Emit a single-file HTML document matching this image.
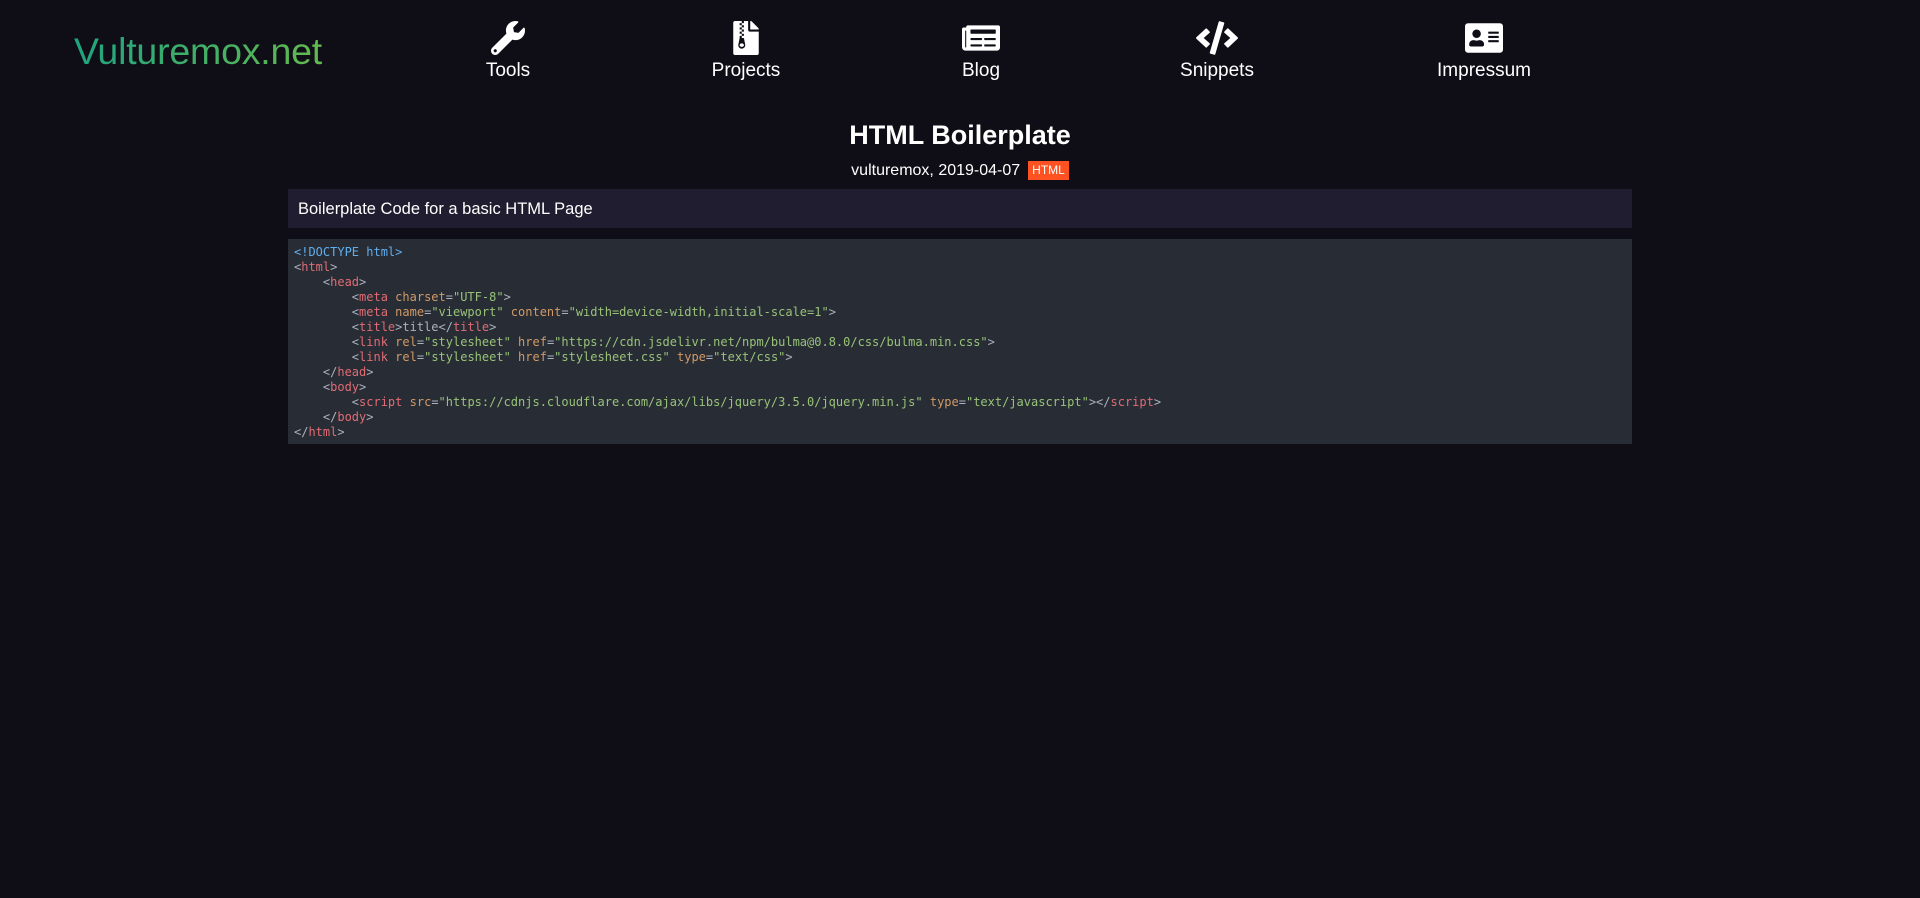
<!DOCTYPE html>
<html><head><meta charset="utf-8">
<style>
html,body{margin:0;padding:0;background:#0f0e17;width:1920px;height:898px;overflow:hidden;font-family:"Liberation Sans",sans-serif;color:#fffffe}
.logo{position:absolute;left:74px;top:29px;font-size:37.5px;line-height:44px;background:linear-gradient(90deg,#1fa57f,#62b94f);-webkit-background-clip:text;background-clip:text;color:transparent;letter-spacing:-0.2px}
.nav{position:absolute;top:21px;width:200px;margin-left:-100px;text-align:center}
.nav svg{display:block;margin:0 auto;height:34px}
.nav span{display:block;font-size:19px;line-height:24px;margin-top:4px;color:#fff}
h1{position:absolute;left:0;width:1920px;top:118px;margin:0;text-align:center;font-size:27px;line-height:34px;font-weight:bold}
.meta{position:absolute;left:0;width:1920px;top:160px;text-align:center;font-size:16px;line-height:22px}
.tag{display:inline-block;background:#ff5222;color:#fff;font-size:12px;line-height:19px;padding:0 4px;margin-left:8px;vertical-align:top;position:relative;top:1px}
.desc{position:absolute;left:288px;width:1344px;top:189px;height:39px;background:#201d30;box-sizing:border-box;padding-left:10px;padding-top:1px;font-size:16.5px;line-height:39px}
pre{position:absolute;left:288px;top:239px;width:1344px;height:205px;margin:0;background:#282c34;box-sizing:border-box;padding:6px 6px 4px;font-family:"DejaVu Sans Mono","Liberation Mono",monospace;font-size:12px;line-height:15px;color:#abb2bf}
.d{color:#61aeee}.t{color:#e06c75}.a{color:#d19a66}.s{color:#98c379}
</style></head><body>
<div class="logo">Vulturemox.net</div>

<div class="nav" style="left:508px"><svg viewBox="0 0 512 512" width="34"><path fill="#fff" d="M507.7 109.1c-2.2-9-13.5-12.1-20.1-5.5l-74.4 74.4-67.9-11.3-11.3-67.9 74.4-74.4c6.6-6.6 3.4-17.9-5.700-20.200-47.400-11.700-99.600.900-136.600 37.900-39.600 39.600-50.500 97.100-34.100 147.200L18.7 402.8c-25 25-25 65.5 0 90.5 25 25 65.5 25 90.5 0l213.2-213.2c50.1 16.7 107.5 5.7 147.4-34.2 37.1-37.1 49.7-89.3 37.9-136.8zM64 472c-13.2 0-24-10.8-24-24 0-13.3 10.7-24 24-24s24 10.7 24 24c0 13.2-10.7 24-24 24z"/></svg><span>Tools</span></div>

<div class="nav" style="left:746px"><svg viewBox="0 0 384 512" width="26"><path fill="#fff" d="M377 105L279.1 7c-4.5-4.5-10.6-7-17-7H256v128h128v-6.1c0-6.3-2.5-12.4-7-16.9zM128.4 336c-17.9 0-32.4 12.1-32.4 27 0 15 14.6 27 32.5 27s32.4-12.1 32.4-27-14.6-27-32.5-27zM224 136V0h-63.6v32h-32V0H24C10.7 0 0 10.7 0 24v464c0 13.3 10.7 24 24 24h336c13.3 0 24-10.7 24-24V160H248c-13.2 0-24-10.8-24-24zM95.9 32h32v32h-32zm32.3 384c-33.2 0-58-30.4-51.4-62.9L96.4 256v-32h32v-32h-32v-32h32v-32h-32V96h32V64h32v32h-32v32h32v32h-32v32h32v32h-32v32h22.1c5.7 0 10.7 4.1 11.8 9.7l17.3 87.7c6.4 32.4-18.4 62.6-51.4 62.6z"/></svg><span>Projects</span></div>

<div class="nav" style="left:981px"><svg viewBox="0 0 576 512" width="38"><path fill="#fff" d="M552 64H88c-13.3 0-24 10.7-24 24v8H24c-13.3 0-24 10.7-24 24v272c0 30.9 25.1 56 56 56h472c26.5 0 48-21.5 48-48V88c0-13.3-10.7-24-24-24zM56 400a8 8 0 0 1-8-8V144h16v248a8 8 0 0 1-8 8zm236-16H140c-6.6 0-12-5.4-12-12v-8c0-6.6 5.4-12 12-12h152c6.6 0 12 5.4 12 12v8c0 6.6-5.4 12-12 12zm208 0H348c-6.6 0-12-5.4-12-12v-8c0-6.6 5.4-12 12-12h152c6.6 0 12 5.4 12 12v8c0 6.6-5.4 12-12 12zm-208-96H140c-6.6 0-12-5.4-12-12v-8c0-6.6 5.4-12 12-12h152c6.6 0 12 5.4 12 12v8c0 6.6-5.4 12-12 12zm208 0H348c-6.6 0-12-5.4-12-12v-8c0-6.6 5.4-12 12-12h152c6.6 0 12 5.4 12 12v8c0 6.6-5.4 12-12 12zm0-96H140c-6.6 0-12-5.4-12-12v-40c0-6.6 5.4-12 12-12h360c6.6 0 12 5.4 12 12v40c0 6.6-5.4 12-12 12z"/></svg><span>Blog</span></div>

<div class="nav" style="left:1217px"><svg viewBox="0 0 640 512" width="42"><path fill="#fff" d="M278.9 511.5l-61-17.7c-6.4-1.8-10-8.5-8.2-14.9L346.2 8.7c1.8-6.4 8.5-10 14.9-8.2l61 17.7c6.4 1.8 10 8.5 8.2 14.9L293.8 503.3c-1.9 6.4-8.5 10.1-14.9 8.2zm-114-112.2l43.5-46.4c4.6-4.9 4.3-12.7-.8-17.2L117 256l90.6-79.7c5.1-4.5 5.5-12.3.8-17.2l-43.5-46.4c-4.5-4.8-12.1-5.1-17-.5L3.8 247.2c-5.1 4.7-5.1 12.8 0 17.5l144.1 135.1c4.9 4.6 12.5 4.4 17-.5zm327.2.6l144.1-135.1c5.1-4.7 5.1-12.8 0-17.5L492.1 112.1c-4.8-4.5-12.4-4.3-17 .5L431.6 159c-4.6 4.9-4.3 12.7.8 17.2L523 256l-90.6 79.7c-5.1 4.5-5.5 12.3-.8 17.2l43.5 46.4c4.5 4.9 12.1 5.1 17 .6z"/></svg><span>Snippets</span></div>

<div class="nav" style="left:1484px"><svg viewBox="0 0 576 512" width="38"><path fill="#fff" d="M528 32H48C21.5 32 0 53.5 0 80v352c0 26.5 21.5 48 48 48h480c26.5 0 48-21.5 48-48V80c0-26.5-21.5-48-48-48zM176 128c35.3 0 64 28.7 64 64s-28.7 64-64 64-64-28.7-64-64 28.7-64 64-64zm112 236.8c0 10.6-10 19.2-22.4 19.2H86.4C74 384 64 375.4 64 364.8v-19.2c0-31.8 30.1-57.6 67.2-57.6h5c12.3 5.1 25.7 8 39.8 8s27.6-2.9 39.8-8h5c37.1 0 67.2 25.8 67.2 57.6v19.2zM512 312c0 4.4-3.6 8-8 8H360c-4.4 0-8-3.6-8-8v-16c0-4.4 3.6-8 8-8h144c4.4 0 8 3.6 8 8v16zm0-64c0 4.4-3.6 8-8 8H360c-4.4 0-8-3.6-8-8v-16c0-4.4 3.6-8 8-8h144c4.4 0 8 3.6 8 8v16zm0-64c0 4.4-3.6 8-8 8H360c-4.4 0-8-3.6-8-8v-16c0-4.4 3.6-8 8-8h144c4.4 0 8 3.6 8 8v16z"/></svg><span>Impressum</span></div>

<h1>HTML Boilerplate</h1>
<div class="meta">vulturemox, 2019-04-07<span class="tag">HTML</span></div>
<div class="desc">Boilerplate Code for a basic HTML Page</div>
<pre><span class="d">&lt;!DOCTYPE html&gt;</span>
&lt;<span class="t">html</span>&gt;
    &lt;<span class="t">head</span>&gt;
        &lt;<span class="t">meta</span> <span class="a">charset</span>=<span class="s">"UTF-8"</span>&gt;
        &lt;<span class="t">meta</span> <span class="a">name</span>=<span class="s">"viewport"</span> <span class="a">content</span>=<span class="s">"width=device-width,initial-scale=1"</span>&gt;
        &lt;<span class="t">title</span>&gt;title&lt;/<span class="t">title</span>&gt;
        &lt;<span class="t">link</span> <span class="a">rel</span>=<span class="s">"stylesheet"</span> <span class="a">href</span>=<span class="s">"https://cdn.jsdelivr.net/npm/bulma@0.8.0/css/bulma.min.css"</span>&gt;
        &lt;<span class="t">link</span> <span class="a">rel</span>=<span class="s">"stylesheet"</span> <span class="a">href</span>=<span class="s">"stylesheet.css"</span> <span class="a">type</span>=<span class="s">"text/css"</span>&gt;
    &lt;/<span class="t">head</span>&gt;
    &lt;<span class="t">body</span>&gt;
        &lt;<span class="t">script</span> <span class="a">src</span>=<span class="s">"https://cdnjs.cloudflare.com/ajax/libs/jquery/3.5.0/jquery.min.js"</span> <span class="a">type</span>=<span class="s">"text/javascript"</span>&gt;&lt;/<span class="t">script</span>&gt;
    &lt;/<span class="t">body</span>&gt;
&lt;/<span class="t">html</span>&gt;</pre>
</body></html>
